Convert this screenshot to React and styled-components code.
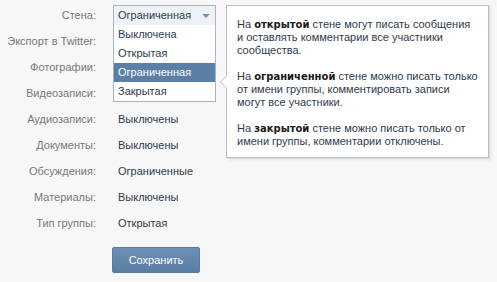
import React, { useState } from "react";
import styled, { createGlobalStyle } from "styled-components";

const GlobalStyle = createGlobalStyle`
  html, body {
    margin: 0;
    padding: 0;
    background: #f7f7f7;
  }
  body {
    font-family: "Liberation Sans", Arial, sans-serif;
    font-size: 11px;
  }
`;

const settings = [
  { label: "Экспорт в Twitter:", value: "" },
  { label: "Фотографии:", value: "" },
  { label: "Видеозаписи:", value: "" },
  { label: "Аудиозаписи:", value: "Выключены" },
  { label: "Документы:", value: "Выключены" },
  { label: "Обсуждения:", value: "Ограниченные" },
  { label: "Материалы:", value: "Выключены" },
  { label: "Тип группы:", value: "Открытая" },
];

const wallOptions = ["Выключена", "Открытая", "Ограниченная", "Закрытая"];

export default function App() {
  const [wall, setWall] = useState("Ограниченная");

  return (
    <>
      <GlobalStyle />
      <Form>
        <Row>
          <Label>Стена:</Label>
          <Field>
            <Select>
              <SelectHead>
                {wall}
                <Caret />
              </SelectHead>
              {wallOptions.map((o) => (
                <Option key={o} $active={o === wall} onClick={() => setWall(o)}>
                  {o}
                </Option>
              ))}
            </Select>
            <Tip>
              <p>
                На <b>открытой</b> стене могут писать сообщения и&nbsp;оставлять
                комментарии все участники сообщества.
              </p>
              <p>
                На <b>ограниченной</b> стене можно писать только от имени
                группы, комментировать записи могут все участники.
              </p>
              <p>
                На <b>закрытой</b> стене можно писать только от имени группы,
                комментарии отключены.
              </p>
            </Tip>
          </Field>
        </Row>
        {settings.map((s) => (
          <Row key={s.label}>
            <Label>{s.label}</Label>
            <Value>{s.value}</Value>
          </Row>
        ))}
        <Actions>
          <SaveButton>Сохранить</SaveButton>
        </Actions>
      </Form>
    </>
  );
}

const Form = styled.div`
  padding-top: 5px;
  display: flex;
  flex-direction: column;
  gap: 6px;
`;

const Row = styled.div`
  display: grid;
  grid-template-columns: 96px 1fr;
  column-gap: 17px;
  height: 20px;
  line-height: 20px;
`;

const Label = styled.div`
  text-align: right;
  color: #777;
  white-space: nowrap;
`;

const Value = styled.div`
  padding-left: 5px;
  color: #2d3b4b;
`;

const Field = styled.div`
  position: relative;
`;

const Select = styled.div`
  position: absolute;
  left: 0;
  top: 0;
  width: 101px;
  border: 1px solid #a5b5c6;
  background: #fff;
  z-index: 2;
`;

const SelectHead = styled.div`
  position: relative;
  height: 19px;
  line-height: 19px;
  padding-left: 4px;
  background: #eef1f5;
  color: #2d3b4b;
`;

const Caret = styled.span`
  position: absolute;
  right: 5px;
  top: 8px;
  border-left: 4px solid transparent;
  border-right: 4px solid transparent;
  border-top: 4px solid #7d8fa3;
`;

const Option = styled.div`
  height: 19px;
  line-height: 19px;
  padding-left: 4px;
  cursor: pointer;
  background: ${(p) => (p.$active ? "#5b7fa6" : "#fff")};
  color: ${(p) => (p.$active ? "#fff" : "#2d3b4b")};
`;

const Tip = styled.div`
  position: absolute;
  left: 113px;
  top: 0;
  width: 242px;
  padding: 12px 9px 9px 10px;
  background: #fff;
  border: 1px solid #b4c0cc;
  box-shadow: 1px 1px 0 #dcdcdc, 3px 3px 2px #ececec;
  color: #2d3b4b;
  line-height: 13px;
  z-index: 3;

  p {
    margin: 0 0 13px;
  }
  p:last-child {
    margin-bottom: 0;
  }
  b {
    font-family: "DejaVu Sans", Verdana, sans-serif;
    font-size: 10px;
    color: #1a1a1a;
  }

  &::before,
  &::after {
    content: "";
    position: absolute;
    top: 70px;
    border-top: 6px solid transparent;
    border-bottom: 6px solid transparent;
  }
  &::before {
    left: -7px;
    border-right: 6px solid #b4c0cc;
  }
  &::after {
    left: -6px;
    border-right: 6px solid #fff;
  }
`;

const Actions = styled.div`
  margin-top: 8px;
  padding-left: 112px;
`;

const SaveButton = styled.button`
  width: 88px;
  height: 26px;
  border: 1px solid #5a7a9e;
  border-radius: 2px;
  background: linear-gradient(#6f91b5, #587ca3);
  color: #fff;
  font-family: inherit;
  font-size: 11px;
  cursor: pointer;
`;
